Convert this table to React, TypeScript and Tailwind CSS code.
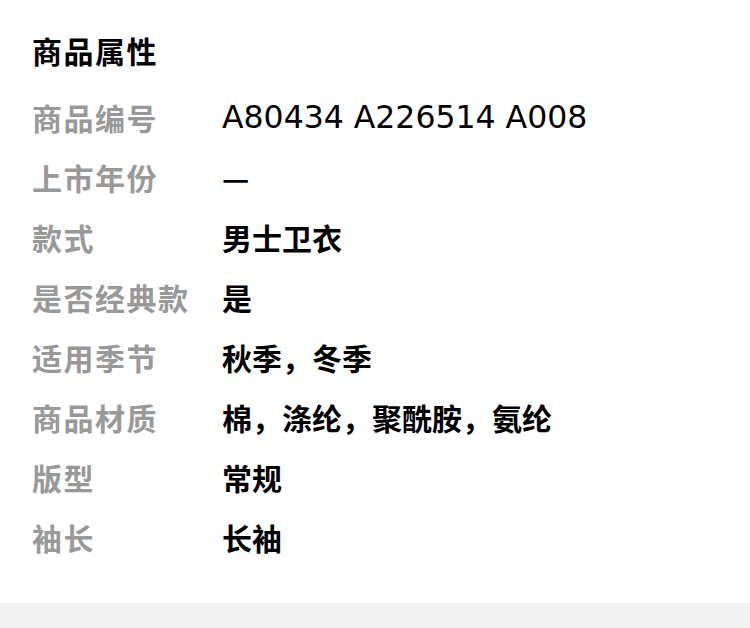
const rows: [string, string][] = [
  ["商品编号", "A80434 A226514 A008"],
  ["上市年份", "—"],
  ["款式", "男士卫衣"],
  ["是否经典款", "是"],
  ["适用季节", "秋季，冬季"],
  ["商品材质", "棉，涤纶，聚酰胺，氨纶"],
  ["版型", "常规"],
  ["袖长", "长袖"],
];

const isLatin = (s: string) => /^[A-Za-z0-9 ]+$/.test(s);

export default function App() {
  return (
    <div className="w-[750px] min-h-[628px] bg-white font-['Noto_Sans_CJK_SC',sans-serif]">
      <div className="px-8 pt-[29px] pb-[36px]">
        <h2 className="h-[42px] leading-[42px] text-[30px] tracking-[1.5px] font-bold text-black">商品属性</h2>
        <div className="mt-4">
          {rows.map(([label, value]) => (
            <div key={label} className="flex items-center h-[60px] text-[30px]">
              <span className="w-[190px] shrink-0 font-bold tracking-[1.5px] text-[#999999]">{label}</span>
              {isLatin(value) ? (
                <span className="font-['DejaVu_Sans',sans-serif] text-[31.5px] leading-[60px] text-black">{value}</span>
              ) : (
                <span className="font-bold text-black">{value}</span>
              )}
            </div>
          ))}
        </div>
      </div>
      <div className="h-[25px] bg-[#f2f2f2]" />
    </div>
  );
}
